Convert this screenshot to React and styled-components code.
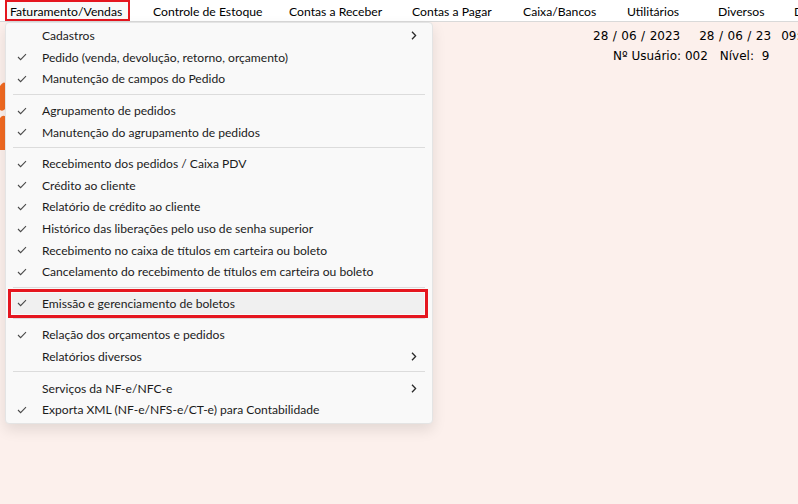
import styled, { createGlobalStyle } from 'styled-components'

const GlobalStyle = createGlobalStyle`
    html, body {
        margin: 0;
        padding: 0;
        background: #fcf0ec;
    }
    body {
        font-family: "Lato", "Segoe UI", "Liberation Sans", sans-serif;
    }
`;

const RED = '#e5161f';

const Page = styled.div`
    position: relative;
    width: 798px;
    height: 504px;
    overflow: hidden;
    background: #fcf0ec;
`;

/* barra de menu superior */
const MenuBar = styled.div`
    display: flex;
    align-items: center;
    height: 21px;
    background: #ffffff;
    border-bottom: 1px solid #d9d9d9;
    padding-left: 5px;
    white-space: nowrap;
    overflow: hidden;
`;

const BarItem = styled.div`
    box-sizing: border-box;
    flex: none;
    width: ${props => props.$w}px;
    height: 21px;
    display: flex;
    align-items: center;
    padding-left: 14px;
    padding-top: 2px;
    font-size: 12.2px;
    color: #000;
`;

const ActiveBarItem = styled(BarItem)`
    padding-left: 3px;
    margin-right: 9px;
    background: #f9f9f9;
    border: 2px solid ${RED};
`;

const Body = styled.div`
    display: flex;
    align-items: flex-start;
`;

const Logo = styled.svg`
    margin-top: 58px;
    flex: none;
`;

const Info = styled.div`
    margin-left: 587px;
    padding-top: 4px;
    font-family: "DejaVu Sans", sans-serif;
    font-size: 12px;
    color: #000;
    white-space: nowrap;
`;

const InfoLine = styled.div`
    height: 20px;
    line-height: 20px;
    padding-left: ${props => props.$indent || 0}px;
`;

const Gap = styled.span`
    display: inline-block;
    width: ${props => props.$w}px;
`;

const Slash = styled.span`
    margin: 0 4.5px;
`;

/* menu suspenso */
const Dropdown = styled.div`
    position: absolute;
    left: 5px;
    top: 22px;
    width: 428px;
    box-sizing: border-box;
    padding: 2px 0 2px;
    background: #f9f9f9;
    border: 1px solid #e4e4e4;
    border-radius: 4px;
    box-shadow: 0 6px 14px rgba(0, 0, 0, 0.1);
`;

const Item = styled.div`
    display: flex;
    align-items: center;
    height: 21.6px;
    margin: 0 4px;
    padding-left: 7px;
    font-size: 12.1px;
    color: #1b1b1b;
    border-radius: 3px;
`;

const HoverItem = styled(Item)`
    margin: 0 8px 0 6px;
    padding-left: 5px;
    background: #f0f0f0;
    border-radius: 0;
    outline: 3px solid ${RED};
    outline-offset: 1px;
`;

const CheckBox = styled.span`
    flex: none;
    width: 25px;
    display: flex;
    align-items: center;
`;

const Label = styled.span`
    flex: 1;
`;

const Arrow = styled.svg`
    margin-right: ${props => props.$right}px;
`;

const Separator = styled.div`
    height: 1px;
    margin: 4px 7px 5px;
    background: #dcdcdc;
`;

const Check = () => (
    <svg width="10" height="8" viewBox="0 0 10 8">
        <polyline points="1,4 3.6,6.6 9,1.2" fill="none" stroke="#4a4a4a" strokeWidth="1.1" />
    </svg>
);

const Chevron = ({ right }) => (
    <Arrow $right={right} width="6" height="9" viewBox="0 0 6 9">
        <polyline points="1,0.8 4.6,4.5 1,8.2" fill="none" stroke="#2a2a2a" strokeWidth="1.3" />
    </Arrow>
);

const bar = [
    { label: 'Controle de Estoque', w: 136 },
    { label: 'Contas a Receber', w: 123 },
    { label: 'Contas a Pagar', w: 111 },
    { label: 'Caixa/Bancos', w: 104 },
    { label: 'Utilitários', w: 91 },
    { label: 'Diversos', w: 76 },
    { label: 'Dados', w: 60 },
];

const menu = [
    { label: 'Cadastros', sub: true },
    { label: 'Pedido (venda, devolução, retorno, orçamento)', check: true },
    { label: 'Manutenção de campos do Pedido', check: true },
    'sep',
    { label: 'Agrupamento de pedidos', check: true },
    { label: 'Manutenção do agrupamento de pedidos', check: true },
    'sep',
    { label: 'Recebimento dos pedidos / Caixa PDV', check: true },
    { label: 'Crédito ao cliente', check: true },
    { label: 'Relatório de crédito ao cliente', check: true },
    { label: 'Histórico das liberações pelo uso de senha superior', check: true },
    { label: 'Recebimento no caixa de títulos em carteira ou boleto', check: true },
    { label: 'Cancelamento do recebimento de títulos em carteira ou boleto', check: true },
    'sep',
    { label: 'Emissão e gerenciamento de boletos', check: true, hover: true },
    'sep',
    { label: 'Relação dos orçamentos e pedidos', check: true },
    { label: 'Relatórios diversos', sub: true },
    'sep',
    { label: 'Serviços da NF-e/NFC-e', sub: true },
    { label: 'Exporta XML (NF-e/NFS-e/CT-e) para Contabilidade', check: true },
];

const DateText = ({ value }) => {
    const parts = value.split('/');
    return (
        <span>
            {parts.map((p, i) => (
                <span key={i}>{i > 0 && <Slash>/</Slash>}{p}</span>
            ))}
        </span>
    );
};

const App = () => (
    <Page>
        <GlobalStyle />
        <MenuBar>
            <ActiveBarItem $w={125}>Faturamento/Vendas</ActiveBarItem>
            {bar.map(b => (
                <BarItem key={b.label} $w={b.w}>{b.label}</BarItem>
            ))}
        </MenuBar>
        <Body>
            <Logo width="6" height="72" viewBox="0 0 6 72">
                <path d="M0 6 Q4 0 6 4 L6 28 Q3 32 0 30 Z" fill="#f26a21" />
                <path d="M0 38 Q3 34 6 37 L6 70 L0 70 Z" fill="#f26a21" />
            </Logo>
            <Info>
                <InfoLine>
                    <DateText value="28/06/2023" />
                    <Gap $w={19} />
                    <DateText value="28/06/23" />
                    <Gap $w={10} />
                    09:41:27
                </InfoLine>
                <InfoLine $indent={20}>
                    Nº Usuário: 002<Gap $w={12} />Nível: <Gap $w={4} />9
                </InfoLine>
            </Info>
        </Body>
        <Dropdown>
            {menu.map((m, i) => {
                if (m === 'sep') return <Separator key={i} />;
                const Row = m.hover ? HoverItem : Item;
                return (
                    <Row key={i}>
                        <CheckBox>{m.check && <Check />}</CheckBox>
                        <Label>{m.label}</Label>
                        {m.sub && <Chevron right={11} />}
                    </Row>
                );
            })}
        </Dropdown>
    </Page>
);

export default App;
